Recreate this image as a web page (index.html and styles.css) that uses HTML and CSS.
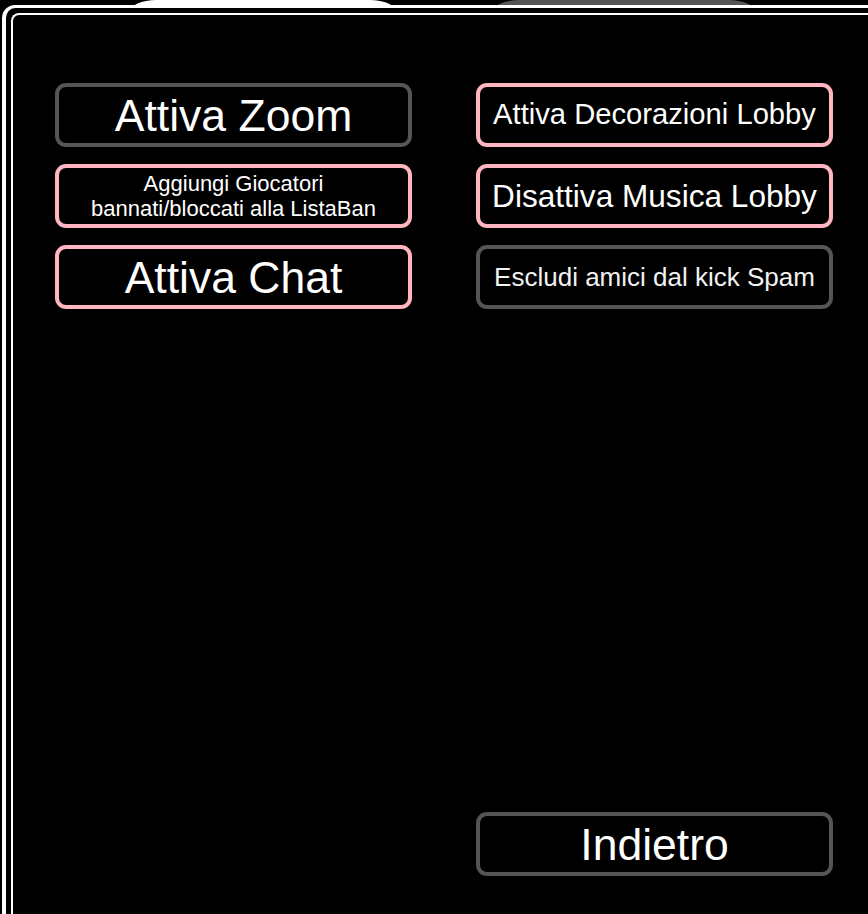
FILE: index.html
```html
<!DOCTYPE html>
<html lang="it">
<head>
<meta charset="utf-8">
<title>Opzioni</title>
<link rel="stylesheet" href="styles.css">
</head>
<body>
<div class="tabs">
  <div class="tab tab-white"></div>
  <div class="tab tab-gray"></div>
</div>
<div class="frame">
  <div class="panel">
    <div class="col">
      <div class="btn gray fs44">Attiva Zoom</div>
      <div class="btn pink fs22">Aggiungi Giocatori<br>bannati/bloccati alla ListaBan</div>
      <div class="btn pink fs44">Attiva Chat</div>
    </div>
    <div class="col col-right">
      <div class="btn pink fs29">Attiva Decorazioni Lobby</div>
      <div class="btn pink fs31">Disattiva Musica Lobby</div>
      <div class="btn gray fs26">Escludi amici dal kick Spam</div>
      <div class="btn gray fs44 back">Indietro</div>
    </div>
  </div>
</div>
</body>
</html>
```
FILE: styles.css
```css
html, body {
  margin: 0;
  padding: 0;
  background: #000;
  width: 868px;
  height: 914px;
  overflow: hidden;
}
body {
  font-family: "Liberation Sans", Arial, sans-serif;
  color: #fff;
}
.tabs {
  height: 5px;
  overflow: hidden;
  display: flex;
  padding-left: 130px;
  gap: 96px;
}
.tab {
  width: 266px;
  height: 14px;
  border-radius: 26px 26px 0 0 / 12px 12px 0 0;
  flex: none;
}
.tab-white { background: #fff; }
.tab-gray { background: #555; margin-left: 1px; width: 262px; }
.frame {
  margin-left: 2px;
  width: 900px;
  height: 940px;
  border: 4px solid #fff;
  border-top-width: 3.5px;
  border-radius: 13px 0 0 0;
  padding: 5px 0 0 5px;
  box-sizing: border-box;
}
.panel {
  height: 100%;
  border: 2.5px solid #fff;
  border-right: none;
  border-bottom: none;
  border-radius: 8px 0 0 0;
  box-sizing: border-box;
  display: flex;
  gap: 64px;
  padding: 67.5px 0 0 42px;
}
.col {
  width: 357px;
  display: flex;
  flex-direction: column;
  gap: 17px;
}
.col-right {
  height: 793px;
}
.btn {
  height: 64px;
  box-sizing: border-box;
  border: 4px solid #555;
  border-radius: 11px;
  display: flex;
  align-items: center;
  justify-content: center;
  text-align: center;
  white-space: nowrap;
  background: #000;
}
.gray { border-color: #555; }
.pink { border-color: #ffb6c1; }
.back { margin-top: auto; }
.fs44 { font-size: 44.5px; line-height: 1; padding-top: 3px; }
.fs31 { font-size: 31.6px; line-height: 1; padding-top: 2px; }
.fs29 { font-size: 29.2px; line-height: 1; padding-top: 1px; }
.fs26 { font-size: 26px; line-height: 1; color: #f2f2f2; padding-top: 1px; }
.fs22 { font-size: 22px; line-height: 25px; }
```
